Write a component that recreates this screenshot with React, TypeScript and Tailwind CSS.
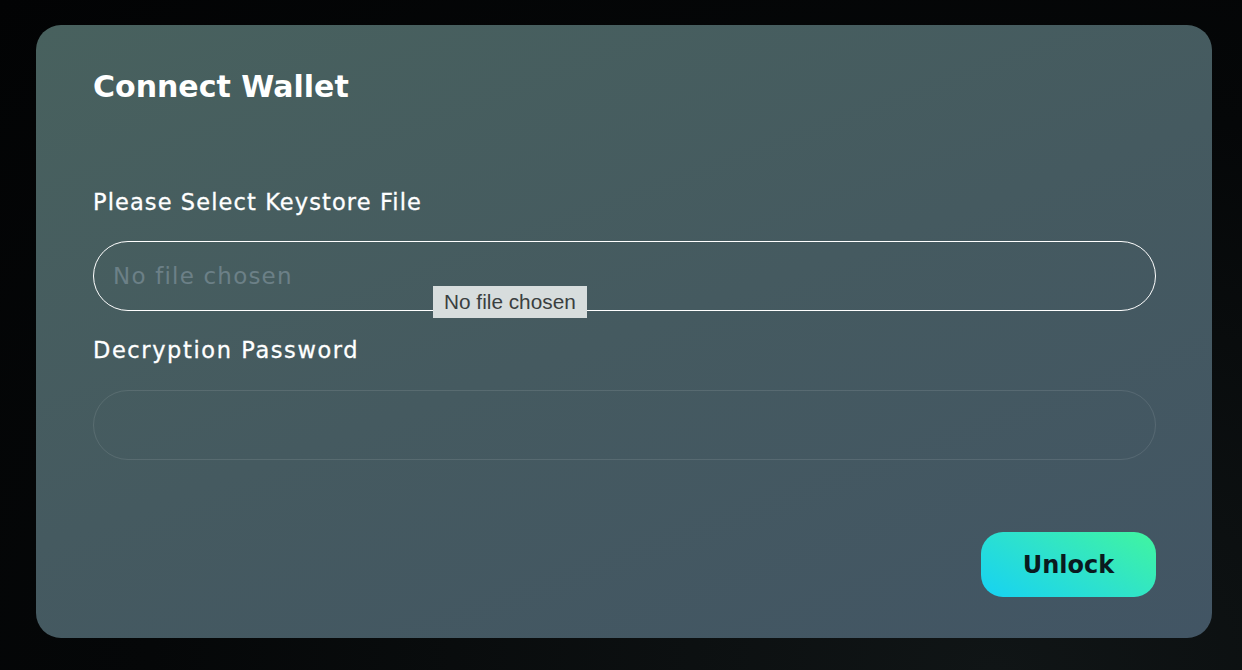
import React from "react";

export default function App() {
  const font = { fontFamily: "'DejaVu Sans', 'Noto Sans', sans-serif" };
  return (
    <div
      className="w-[1242px] h-[670px] overflow-hidden bg-[radial-gradient(ellipse_at_80%_100%,#101516_0%,#050708_60%,#020304_100%)] pt-[25px] pl-[36px]"
      style={font}
    >
      <div className="relative w-[1176px] h-[613px] rounded-[25px] bg-[linear-gradient(160deg,#48615e_0%,#455a60_50%,#425564_100%)] pl-[57px] pr-[56px] pt-[40px] flex flex-col">
        <h1 className="text-[30px] leading-[44px] font-bold text-white">Connect Wallet</h1>
        <label className="mt-[78px] text-[22.5px] leading-[30px] tracking-[1.1px] text-white [-webkit-text-stroke:0.3px_white]">
          Please Select Keystore File
        </label>
        <div className="mt-[24px] h-[70px] rounded-full border-[1.5px] border-white flex items-center px-[19px]">
          <span className="text-[23px] tracking-[1.2px] text-[#6c8087]">No file chosen</span>
        </div>
        <label className="mt-[24px] text-[22.5px] leading-[30px] tracking-[1.6px] text-white [-webkit-text-stroke:0.3px_white]">
          Decryption Password
        </label>
        <div className="mt-[25px] h-[70px] rounded-full border-[1.5px] border-white/10" />
        <div className="mt-[72px] flex justify-end">
          <button className="w-[175px] h-[65px] rounded-[22px] bg-[linear-gradient(30deg,#16d2f3_0%,#2ee2cc_50%,#41f59f_100%)] text-[24px] font-bold text-[#0a1a1f]">
            Unlock
          </button>
        </div>
        <div
          className="absolute left-[397px] top-[261px] h-[32px] px-[11px] bg-[#d7dddd] text-[#3a3f40] text-[20.8px] flex items-center"
          style={{ fontFamily: "'Liberation Sans', Arial, sans-serif" }}
        >
          No file chosen
        </div>
      </div>
    </div>
  );
}
